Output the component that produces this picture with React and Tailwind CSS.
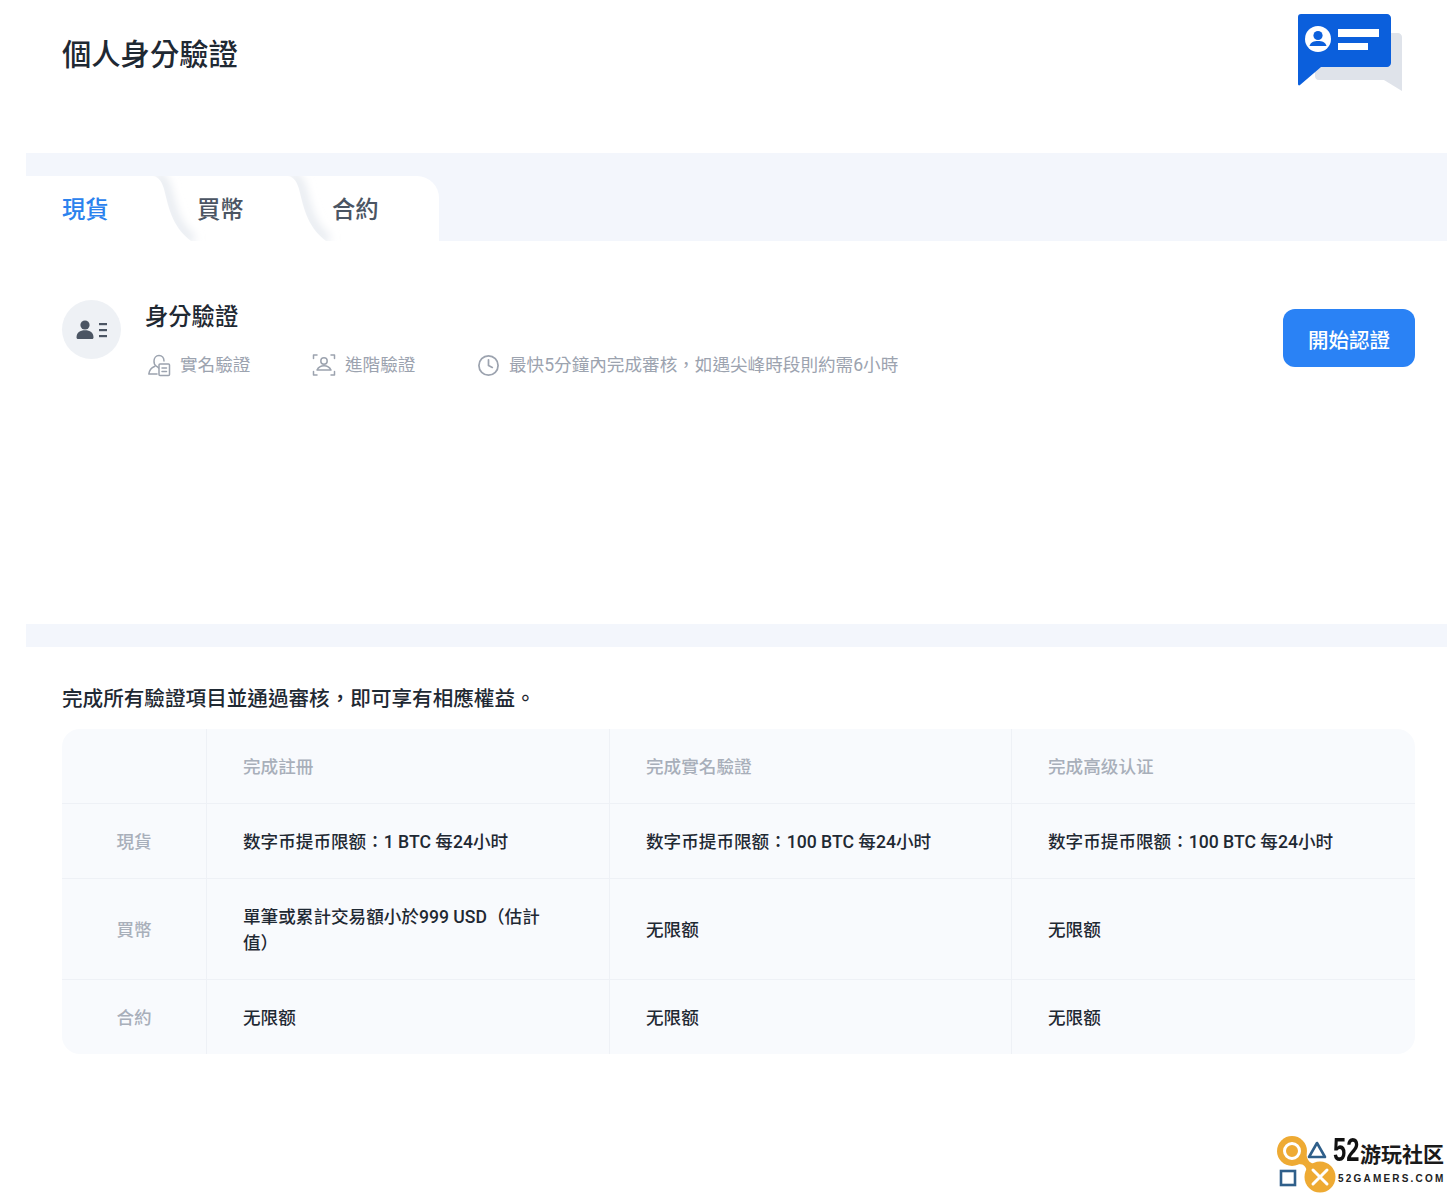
import React from "react";
import { Clock } from "lucide-react";

const TabCurve = ({ className, id }) => (
  <svg className={className} width="60" height="65" viewBox="0 0 60 65" fill="none">
    <defs>
      <filter id={`${id}Blur`} x="-50%" y="-20%" width="200%" height="140%">
        <feGaussianBlur stdDeviation="5" />
      </filter>
      <clipPath id={`${id}Clip`}>
        <path d="M0 0 L60 0 L60 65 L38 65 C18 50 15 28 11 13 C9 6 6 1 0 0 Z" />
      </clipPath>
    </defs>
    <g clipPath={`url(#${id}Clip)`}>
      <path d="M2 0 C8 1 11 6 13 13 C17 28 20 50 40 65" stroke="#e6eaf0" strokeWidth="10" filter={`url(#${id}Blur)`} />
    </g>
  </svg>
);

const IdIcon = () => (
  <svg width="32" height="22" viewBox="0 0 32 22" fill="#4b5563">
    <circle cx="9" cy="6" r="4.6" />
    <path d="M0.5 18.5 C0.5 13.5 4 11.2 9 11.2 C14 11.2 17.5 13.5 17.5 18.5 C17.5 19.4 17 20 16 20 L2 20 C1 20 0.5 19.4 0.5 18.5 Z" />
    <rect x="23" y="4" width="8" height="2.2" />
    <rect x="23" y="10" width="8" height="2.2" />
    <rect x="23" y="16" width="8" height="2.2" />
  </svg>
);

const NameIcon = () => (
  <svg width="24" height="24" viewBox="0 0 24 24" fill="none" stroke="#9ca3af" strokeWidth="1.5" strokeLinecap="round" strokeLinejoin="round">
    <path d="M11.5 15 C11 14 10 13.5 9 13 C7.5 12.2 7 10.5 7 8 C7 5 9 2.5 12 2.5 C15 2.5 17 4.8 17 8" />
    <path d="M7.5 13.5 C5 14.5 2.5 16.5 1.8 21 L10 21" />
    <rect x="12" y="11" width="10.5" height="11.5" rx="1" />
    <path d="M15 15 L19.5 15 M15 18.5 L19.5 18.5" />
  </svg>
);

const FaceIcon = () => (
  <svg width="24" height="24" viewBox="0 0 24 24" fill="none" stroke="#9ca3af" strokeWidth="1.5" strokeLinecap="round" strokeLinejoin="round">
    <path d="M5 2 L1.5 2 L1.5 5.5 M19 2 L22.5 2 L22.5 5.5 M1.5 18.5 L1.5 22 L5 22 M22.5 18.5 L22.5 22 L19 22" />
    <circle cx="12" cy="8" r="3.2" />
    <path d="M5 17 C6.5 14 8.5 12.8 12 12.8 C15.5 12.8 17.5 14 19 17 Z" />
  </svg>
);

const HeaderArt = () => (
  <svg width="106" height="80" viewBox="0 0 106 80" fill="none">
    <path d="M18 19 L101 19 C103 19 105 21 105 23 L105 77 L87 66 L22 66 C19 66 18 64 18 62 Z" fill="#dfe3ea" />
    <path d="M4 0 L90 0 C92 0 94 2 94 4 L94 49 C94 51 92 53 90 53 L24 53 L3 71 C2 72 1 71 1 70 L1 3 C1 1 2 0 4 0 Z" fill="#0b5fdc" />
    <circle cx="21" cy="25" r="13" fill="#ffffff" />
    <circle cx="21" cy="21.5" r="4.6" fill="#0b5fdc" />
    <path d="M12.5 32 C13.5 28 17 27 21 27 C25 27 28.5 28 29.5 32 Z" fill="#0b5fdc" />
    <rect x="41" y="15" width="41" height="8" fill="#ffffff" />
    <rect x="41" y="29" width="30" height="7" fill="#ffffff" />
  </svg>
);

const Watermark = () => (
  <div className="absolute right-[9px] bottom-[3px] flex items-start">
    <svg width="60" height="59" viewBox="0 0 60 59" fill="none">
      <circle cx="15" cy="17" r="15" fill="#eeaa33" />
      <circle cx="43" cy="43" r="15.5" fill="#eeaa33" />
      <path d="M21 30 C28 30 30 33 30 42 L40 30 C33 30 30 27 29 18 Z" fill="#eeaa33" />
      <circle cx="15" cy="17" r="7.5" stroke="#ffffff" strokeWidth="3" />
      <path d="M40 9 L48 23 L32 23 Z" stroke="#2f5f8a" strokeWidth="2.6" strokeLinejoin="round" />
      <rect x="4" y="37" width="14" height="14" stroke="#2f5f8a" strokeWidth="2.6" />
      <path d="M36 36 L50 50 M50 36 L36 50" stroke="#ffffff" strokeWidth="3" strokeLinecap="round" />
    </svg>
    <div className="ml-[-4px] flex w-[112px] flex-col">
      <div className="flex items-start">
        <span className="w-[27px] origin-left scale-x-[0.72] font-['Liberation_Sans',sans-serif] text-[33px] leading-[32px] font-bold text-[#111]">52</span>
        <span className="mt-[8px] text-[21px] leading-[26px] font-bold text-[#1a1a1a] whitespace-nowrap">游玩社区</span>
      </div>
      <span className="mt-[4px] ml-[5px] font-['Liberation_Sans',sans-serif] text-[10px] leading-[14px] font-bold tracking-[2.2px] text-[#222] whitespace-nowrap">52GAMERS.COM</span>
    </div>
  </div>
);

const rows = [
  { name: "現貨", h: "h-[75px]", cells: ["数字币提币限额：1 BTC 每24小时", "数字币提币限额：100 BTC 每24小时", "数字币提币限额：100 BTC 每24小时"] },
  { name: "買幣", h: "h-[101px]", cells: ["單筆或累計交易額小於999 USD（估計值）", "无限额", "无限额"] },
  { name: "合約", h: "h-[74px]", cells: ["无限额", "无限额", "无限额"] },
];

const App = () => {
  return (
    <div className="relative h-[1196px] overflow-hidden bg-white pl-[26px] pr-[7px] font-['Roboto','Noto_Sans_CJK_TC',sans-serif]">
      <div className="flex h-[153px] justify-between pl-[36px] pr-[44px]">
        <h1 className="mt-[34px] text-[29.3px] leading-[42px] font-medium text-[#1f2933]">個人身分驗證</h1>
        <div className="mt-[14px]"><HeaderArt /></div>
      </div>

      <div className="flex h-[88px] items-end bg-[#f3f6fc]">
        <div className="relative flex h-[65px] w-[413px] items-center overflow-hidden rounded-tr-[22px] bg-white pl-[36px] pt-[3px] text-[23.3px] font-medium text-[#4b5563]">
          <TabCurve id="tabShadeA" className="absolute left-[127px] top-0" />
          <TabCurve id="tabShadeB" className="absolute left-[262px] top-0" />
          <span className="relative w-[135px] text-[#2b82ee]">現貨</span>
          <span className="relative w-[135px]">買幣</span>
          <span className="relative">合約</span>
        </div>
      </div>

      <div className="flex h-[383px] items-start justify-between pl-[36px] pr-[32px] pt-[59px]">
        <div className="flex gap-[24px]">
          <div className="flex h-[59px] w-[59px] items-center justify-center rounded-full bg-[#eef1f5]">
            <IdIcon />
          </div>
          <div>
            <h2 className="text-[23.3px] leading-[34px] font-medium text-[#1f2933]">身分驗證</h2>
            <div className="mt-[18px] flex items-center text-[17.6px] leading-[26px] text-[#9ca3af]">
              <span className="ml-[2px] mr-[9px]"><NameIcon /></span>
              <span className="w-[62px] whitespace-nowrap">實名驗證</span>
              <span className="ml-[70px] mr-[9px]"><FaceIcon /></span>
              <span className="w-[70px] whitespace-nowrap">進階驗證</span>
              <Clock className="ml-[62px] mr-[9px]" size={23} strokeWidth={1.8} color="#9ca3af" />
              <span className="whitespace-nowrap">最快5分鐘內完成審核，如遇尖峰時段則約需6小時</span>
            </div>
          </div>
        </div>
        <button className="mt-[9px] h-[58px] w-[132px] rounded-[12px] bg-[#2a82f5] pt-[6px] text-[20.5px] font-medium text-white">開始認證</button>
      </div>

      <div className="h-[23px] bg-[#f3f6fc]" />

      <div className="pl-[36px] pr-[32px]">
        <p className="mt-[37px] text-[20.6px] leading-[30px] font-medium text-[#1f2933]">完成所有驗證項目並通過審核，即可享有相應權益。</p>
        <div className="mt-[15px] overflow-hidden rounded-[18px] bg-[#f8fafd] text-[17.6px]">
          <div className="grid h-[75px] grid-cols-[144px_403px_402px_404px] items-stretch border-b border-[#eef1f6] font-medium text-[#a8afba]">
            <div />
            <div className="flex items-center border-l border-[#eef1f6] pl-[36px] pt-[2px]">完成註冊</div>
            <div className="flex items-center border-l border-[#eef1f6] pl-[36px] pt-[2px]">完成實名驗證</div>
            <div className="flex items-center border-l border-[#eef1f6] pl-[36px] pt-[2px]">完成高级认证</div>
          </div>
          {rows.map((row, idx) => (
            <div
              key={row.name}
              className={`grid grid-cols-[144px_403px_402px_404px] items-stretch ${row.h} ${idx < rows.length - 1 ? "border-b border-[#eef1f6]" : ""}`}
            >
              <div className="flex items-center justify-center pt-[2px] font-medium text-[#a8afba]">{row.name}</div>
              {row.cells.map((cell, i) => (
                <div key={i} className="flex items-center border-l border-[#eef1f6] pl-[36px] pr-[60px] pt-[2px] leading-[26px] font-medium text-[#1f2933]">
                  {cell}
                </div>
              ))}
            </div>
          ))}
        </div>
      </div>

      <Watermark />
    </div>
  );
};

export default App;
